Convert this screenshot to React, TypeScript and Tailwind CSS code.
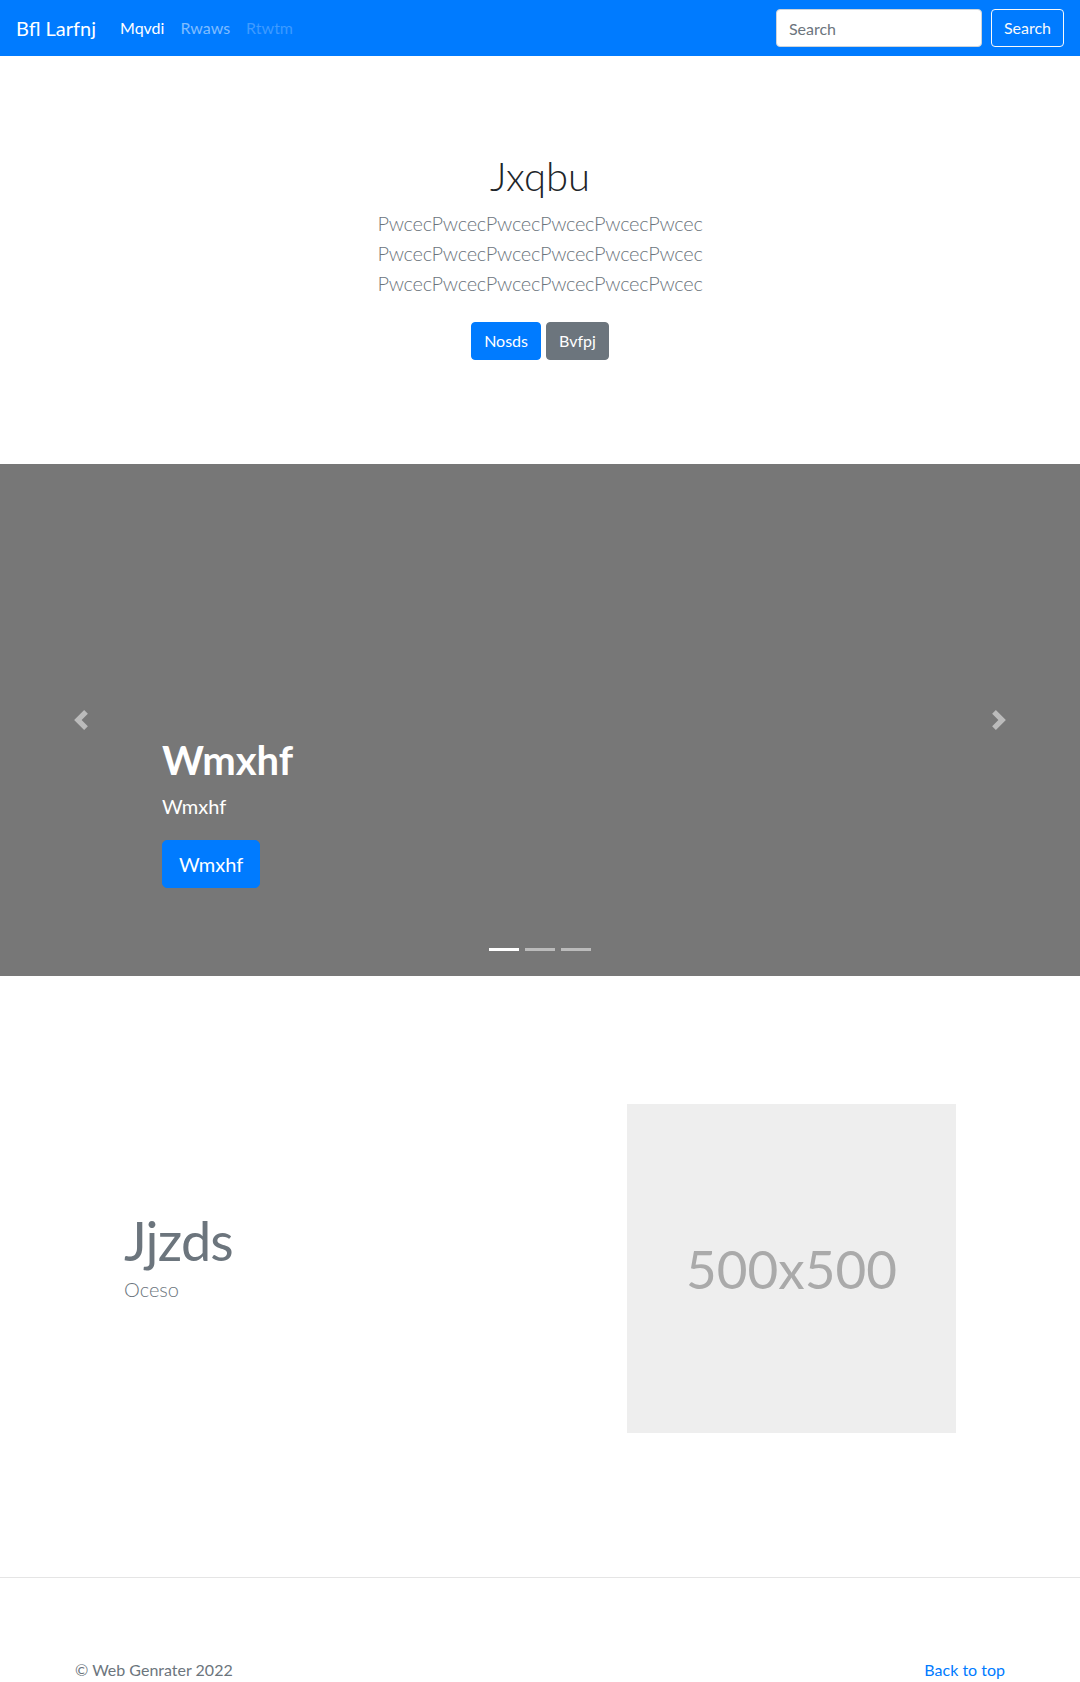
import React from "react";

// chevron used by the carousel controls (bootstrap 4 style)
const Chevron = ({ dir }: { dir: "left" | "right" }) => (
	<svg viewBox="0 0 8 8" className="h-5 w-5" fill="#fff">
		<title>{dir === "left" ? "Previous" : "Next"}</title>
		{dir === "left" ? (
			<path d="M5.25 0l-4 4 4 4 1.5-1.5L4.25 4l2.5-2.5L5.25 0z" />
		) : (
			<path d="M2.75 0l-1.5 1.5L3.75 4l-2.5 2.5L2.75 8l4-4-4-4z" />
		)}
	</svg>
);

const Navbar = () => (
	<nav className="flex h-14 items-center bg-[#007bff] px-4">
		<a href="#" className="mr-4 py-[5px] text-xl leading-[1.5] text-white">
			Bfl Larfnj
		</a>
		<ul className="flex text-base">
			<li>
				<a href="#" className="px-2 text-white">
					Mqvdi
				</a>
			</li>
			<li>
				<a href="#" className="px-2 text-white/50">
					Rwaws
				</a>
			</li>
			<li>
				<a href="#" className="px-2 text-white/25">
					Rtwtm
				</a>
			</li>
		</ul>
		<form className="ml-auto flex items-center">
			<input
				type="search"
				placeholder="Search"
				className="mr-[9px] h-[38px] w-[206px] rounded border border-[#ced4da] bg-white px-3 text-base text-[#495057] placeholder:text-[#6c757d] outline-none"
			/>
			<button
				type="button"
				className="h-[38px] rounded border border-[#f8f9fa] px-3 text-base text-[#f8f9fa]"
			>
				Search
			</button>
		</form>
	</nav>
);

const Hero = () => (
	<section className="pt-24 pb-24 text-center">
		<h1 className="mb-2 text-[40px] font-light leading-[1.2] text-[#212529]">Jxqbu</h1>
		<p className="mx-auto mb-4 w-[456px] text-xl font-light leading-[1.5] tracking-[-0.3px] text-[#6c757d]">
			PwcecPwcecPwcecPwcecPwcecPwcec PwcecPwcecPwcecPwcecPwcecPwcec
			PwcecPwcecPwcecPwcecPwcecPwcec
		</p>
		<div className="flex justify-center gap-[5px] py-2">
			<a
				href="#"
				className="rounded border border-[#007bff] bg-[#007bff] px-3 py-1.5 text-base leading-[1.5] text-white"
			>
				Nosds
			</a>
			<a
				href="#"
				className="rounded border border-[#6c757d] bg-[#6c757d] px-3 py-1.5 text-base leading-[1.5] text-white"
			>
				Bvfpj
			</a>
		</div>
	</section>
);

const Carousel = () => (
	<div className="relative h-[512px] bg-[#777]">
		<a href="#" className="absolute inset-y-0 left-0 flex w-[15%] items-center justify-center opacity-50">
			<Chevron dir="left" />
		</a>
		<a href="#" className="absolute inset-y-0 right-0 flex w-[15%] items-center justify-center opacity-50">
			<Chevron dir="right" />
		</a>
		<div className="absolute bottom-12 left-[15%] right-[15%] py-5 text-left text-white">
			<h1 className="mb-2 text-[40px] font-bold leading-[1.2]">Wmxhf</h1>
			<p className="mb-5 text-xl leading-[1.4]">Wmxhf</p>
			<div className="mb-5 flex">
				<a
					href="#"
					className="rounded-[5px] border border-[#007bff] bg-[#007bff] px-4 py-2 text-xl leading-[1.5] text-white"
				>
					Wmxhf
				</a>
			</div>
		</div>
		<ol className="absolute bottom-[25px] left-0 right-0 flex justify-center">
			<li className="mx-[3px] h-[3px] w-[30px] bg-white" />
			<li className="mx-[3px] h-[3px] w-[30px] bg-white/50" />
			<li className="mx-[3px] h-[3px] w-[30px] bg-white/50" />
		</ol>
	</div>
);

const Featurette = () => (
	<section className="flex items-center pb-36 pl-[124px] pt-[128px]">
		<div className="w-[503px] pb-[25px]">
			<h2 className="text-[54px] font-normal leading-[1.24] tracking-[-0.05rem] text-[#6c757d]">Jjzds</h2>
			<p className="text-xl font-light leading-[1.5] text-[#6c757d]">Oceso</p>
		</div>
		<div className="flex h-[329px] w-[329px] items-center justify-center bg-[#eee]">
			<span className="text-[53px] text-[#aaa]">500x500</span>
		</div>
	</section>
);

export default function App() {
	return (
		<div className="min-h-screen bg-white font-['Segoe_UI','Lato',sans-serif] text-[#212529]">
			<Navbar />
			<Hero />
			<Carousel />
			<Featurette />
			<footer className="border-t border-[#e5e5e5] pb-12 pt-20">
				<div className="mx-auto flex w-[930px] justify-between text-base leading-[1.5]">
					<p className="text-[#6c757d]">© Web Genrater 2022</p>
					<a href="#" className="text-[#007bff]">
						Back to top
					</a>
				</div>
			</footer>
		</div>
	);
}
